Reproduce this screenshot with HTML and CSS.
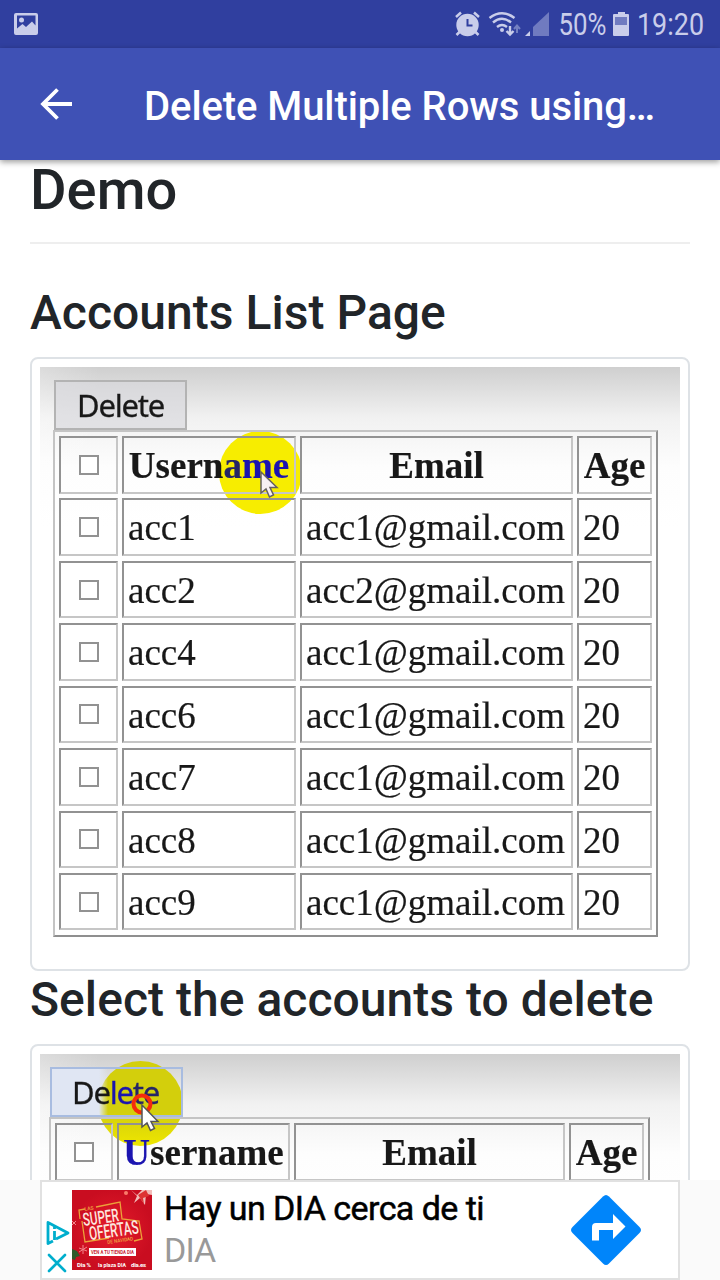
FILE: index.html
```html
<!DOCTYPE html>
<html lang="en">
<head>
<meta charset="utf-8">
<title>Delete Multiple Rows</title>
<link rel="stylesheet" href="styles.css">
</head>
<body>
<div class="screen">
  <div class="status">
    <svg class="status-photo" width="24" height="22" viewBox="0 0 24 22"><path fill="#c9cdea" fill-rule="evenodd" d="M2 0h20q2 0 2 2v18q0 2-2 2H2q-2 0-2-2V2q0-2 2-2zM3 2.500v13L8.500 11l3.500 3 6-5.500 3.500 4v-10z"/><circle cx="7.500" cy="7" r="2.500" fill="#c9cdea"/></svg>
    <svg class="status-right" width="256" height="40" viewBox="452 6 256 40">
      <g fill="#c9cdea">
        <circle cx="467.500" cy="25" r="11.200"/>
        <path d="M459.500 32l-3 3M475.500 32l3 3" stroke="#c9cdea" stroke-width="2.500"/>
        <path d="M456 17l5-4.500M479 17l-5-4.500" stroke="#c9cdea" stroke-width="2.500"/>
        <path d="M467.500 19v6.500h5" fill="none" stroke="#303f9f" stroke-width="2"/>
        <g fill="none" stroke="#c9cdea" stroke-width="2.400"><path d="M489.500 18q12.500-9.500 25 0M493 22.500q9-7.500 18 0M497 27q5-4 10 0"/><path d="M510 26v8M506.500 31l3.500 3.500 3.500-3.500"/></g>
        <circle cx="502" cy="30" r="2"/>
        <path d="M517 33v-7M514 29l3-3.500 3 3.500" fill="none" stroke="#7480c2" stroke-width="2"/>
        <path d="M530 31v5h-5z"/>
        <path d="M549 12v24h-16V27z" fill="#707bc0"/>
        <path d="M618 12h7v2h3q1 0 1 1v20q0 1-1 1h-14q-1 0-1-1V15q0-1 1-1h4z"/>
        <path d="M615 17h12v8h-12z" fill="#707bc0"/>
        <text x="558.500" y="35" textLength="48" lengthAdjust="spacingAndGlyphs">50%</text>
        <text x="637" y="35" textLength="67" lengthAdjust="spacingAndGlyphs">19:20</text>
      </g>
    </svg>
  </div>
  <header class="appbar">
    <svg width="32" height="32" viewBox="0 0 32 32" fill="none" stroke="#fff" stroke-width="3.800"><path d="M32 16H4M17.500 1.500L3 16l14.500 14.500"/></svg>
    <div class="title">Delete Multiple Rows using…</div>
  </header>
  <main class="content">
    <h1>Demo</h1>
    <h2 class="first">Accounts List Page</h2>
    <div class="thumb">
      <div class="shot">
        <span class="spot spot-name"></span>
        <div class="button">Delete</div>
        <div class="grid">
          <div class="cell check"><i></i></div><div class="cell head">Usern<span class="mid">a</span><span class="lit">me</span></div><div class="cell head">Email</div><div class="cell head">Age</div>
          <div class="cell check"><i></i></div><div class="cell">acc1</div><div class="cell">acc1@gmail.com</div><div class="cell">20</div>
          <div class="cell check"><i></i></div><div class="cell">acc2</div><div class="cell">acc2@gmail.com</div><div class="cell">20</div>
          <div class="cell check"><i></i></div><div class="cell">acc4</div><div class="cell">acc1@gmail.com</div><div class="cell">20</div>
          <div class="cell check"><i></i></div><div class="cell">acc6</div><div class="cell">acc1@gmail.com</div><div class="cell">20</div>
          <div class="cell check"><i></i></div><div class="cell">acc7</div><div class="cell">acc1@gmail.com</div><div class="cell">20</div>
          <div class="cell check"><i></i></div><div class="cell">acc8</div><div class="cell">acc1@gmail.com</div><div class="cell">20</div>
          <div class="cell check"><i></i></div><div class="cell">acc9</div><div class="cell">acc1@gmail.com</div><div class="cell">20</div>
        </div>
        <svg class="pointer pointer-name" width="20" height="30" viewBox="0 0 20 30"><path d="M2 2v21l5-4 3.500 8 4-2-3.500-7.500h7z" fill="#f7eff2" stroke="#66605f" stroke-width="1.500"/></svg>
      </div>
    </div>
    <h2 class="select">Select the accounts to delete</h2>
    <div class="thumb">
      <div class="shot second">
        <span class="spot spot-button"></span>
        <div class="button active">De<span class="lit">le</span><span class="mid">te</span></div>
        <div class="grid">
          <div class="cell check"><i></i></div><div class="cell head"><span class="lit">U</span>sername</div><div class="cell head">Email</div><div class="cell head">Age</div>
        </div>
        <svg class="pointer pointer-button" width="32" height="42" viewBox="0 0 32 42"><circle cx="12" cy="12" r="8.500" fill="none" stroke="#f52b0b" stroke-width="4"/><path d="M12 13v22l5-4 3.500 7.500 4-2-3.500-7h7z" fill="#fff" stroke="#555" stroke-width="1.500"/></svg>
      </div>
    </div>
  </main>
  <footer class="adbar">
    <div class="ad">
      <div class="ad-marks">
        <svg width="24" height="26" viewBox="0 0 24 26" fill="none" stroke="#00aecd" stroke-width="2.800" stroke-linejoin="round"><path d="M7 21l-5 2.500v-21L22 13 10 19"/><path d="M8.500 11v9M8.500 6.500v2.500"/></svg>
        <svg width="20" height="20" viewBox="0 0 20 20" fill="none" stroke="#00aecd" stroke-width="2.600" stroke-linecap="round"><path d="M2 2l16 16M18 2L2 18"/></svg>
      </div>
      <svg class="promo" width="80" height="80" viewBox="0 0 80 80">
        <defs><radialGradient id="red"><stop offset="0" stop-color="#e51c2b"/><stop offset="1" stop-color="#c90d20"/></radialGradient></defs>
        <path fill="url(#red)" d="M0 0h80v80H0z"/>
        <path d="M59 0l6 5 5-5h10v5l-6-1-1 11-5-7-6 5 3-7z" fill="#f1bcb8"/><path d="M66 5l8-5 3 6-6 2 1 6z" fill="#d33"/><circle cx="54" cy="3" r="2" fill="#fa7b69"/>
        <path d="M24 17l24-5 2 17 17 2 3 18-8 2M8 29l-1-9 6-1M10 31l3 21 24-4" fill="none" stroke="#eba23a" stroke-width="1.300"/>
        <g font-family="Roboto, sans-serif" font-weight="500" fill="#fde6df">
          <g transform="rotate(-8 12 37)"><text x="12" y="36" font-size="18" textLength="36" lengthAdjust="spacingAndGlyphs">SUPER</text><text x="16" y="51" font-size="19" textLength="50" lengthAdjust="spacingAndGlyphs">OFERTAS</text><text x="15" y="21" font-size="5" fill="#efa241" textLength="9">LAS</text><text x="33" y="57" font-size="5" fill="#efa241" textLength="26" lengthAdjust="spacingAndGlyphs">DE NAVIDAD</text></g>
          <path d="M17 58h47v8H17z" fill="#fff"/><text x="19" y="64" font-size="5" font-weight="700" fill="#c91c31" textLength="43" lengthAdjust="spacingAndGlyphs">VEN A TU TIENDA DIA</text>
          <g font-size="6" font-weight="700" fill="#fff"><text x="5" y="77" textLength="14">Dia %</text><text x="26" y="77" textLength="28" lengthAdjust="spacingAndGlyphs">la plaza DIA</text><text x="59" y="77" textLength="15">dia.es</text></g>
        </g>
        <path d="M7 58l8 3M11 55v9M7 62l8-5M0 31l4 4M0 35l4-4" stroke="#f3858b"/><path d="M0 59l5 2 3 5-4 1-1 3-3-1z" fill="#2e5a2b"/>
      </svg>
      <div class="ad-text"><div class="ad-title">Hay un DIA cerca de ti</div><div class="ad-sub">DIA</div></div>
      <svg class="go" width="70" height="70" viewBox="0 0 70 70"><path d="M32 1.500q3-3 6 0L68.500 32q3 3 0 6L38 68.500q-3 3-6 0L1.500 38q-3-3 0-6z" fill="#0085fa"/><path d="M21 45.500V32q0-4 4-4h17v-9l12.500 12.500L42 44v-9H28v10.500z" fill="#fff"/></svg>
    </div>
  </footer>
</div>
</body>
</html>
```

FILE: styles.css
```css
* { box-sizing: border-box; }
body { margin: 0; font-family: Roboto, sans-serif; color: #212529; background: #fff; }
.screen { width: 720px; height: 1280px; display: flex; flex-direction: column; overflow: hidden; }
.status { flex: none; height: 48px; background: #303f9f; display: flex; justify-content: space-between; padding: 6px 12px 0 14px; }
.status-photo { margin-top: 7px; }
.status-right { font-size: 31px; font-family: Roboto, sans-serif; overflow: visible; }
.appbar { flex: none; height: 112px; background: #3f51b5; display: flex; align-items: center; gap: 72px; padding-left: 40px; position: relative; z-index: 2; box-shadow: 0 2px 6px rgba(0, 0, 0, .4); }
.title { color: #fff; font-size: 40px; font-weight: 500; line-height: 48px; padding-top: 6px; white-space: nowrap; letter-spacing: -.08px; }
.content { flex: 1; min-height: 0; overflow: hidden; padding: 0 30px; }
h1, h2 { margin: 0; font-weight: 500; white-space: nowrap; letter-spacing: .04px; }
h1 { height: 84px; border-bottom: 2px solid #eee; font-size: 56px; line-height: 60px; }
h2 { font-size: 48px; line-height: 58px; }
h2.first { height: 113px; padding-top: 40px; }
h2.select { height: 73px; }
.thumb { border: 2px solid #dee2e6; border-radius: 8px; padding: 8px; height: 614px; }
.shot { position: relative; height: 100%; padding: 13px 0 0 13px; background: linear-gradient(#cfcfcf, #f1f1f1 50px, #fdfdfd 100px, #fff 160px); filter: blur(.5px); color: #181818; }
.shot::before { content: ""; position: absolute; inset: 0; background: linear-gradient(90deg, rgba(255,255,255,.25), transparent 60px); }
.button { position: relative; width: 133px; height: 50px; margin-left: 1px; border: 2px solid #b3b3b3; background: rgba(215, 215, 219, .65); font: 31px/46px "Noto Sans", "Open Sans", sans-serif; text-align: center; letter-spacing: -1.2px; -webkit-text-stroke: .3px; }
.active { border-color: #a8bce0; background: linear-gradient(90deg, #e0e6f3 47px, transparent 56px); text-indent: -2px; }
.grid { position: relative; width: 605px; display: grid; grid-template-columns: 59px 174px 273px 75px; grid-auto-rows: 57.500px; gap: 4.930px 4px; padding: 4px 4px 5px; border: 2px solid; border-color: #c4c4c4 #8f8f8f #8f8f8f #c4c4c4; }
.cell { border: 2px solid; border-color: #929292 #c6c6c6 #c6c6c6 #929292; font: 37px/55px "Liberation Serif", serif; padding-left: 4px; white-space: nowrap; -webkit-text-stroke: .2px; }
.head { font-weight: 700; text-align: center; padding-left: 0; }
.check { display: flex; align-items: center; justify-content: center; padding: 0; }
.check i { width: 20px; height: 20px; border: 2px solid #929292; background: #fff; }
.lit { color: #1b14b0; }
.mid { color: #252567; }
.spot { position: absolute; border-radius: 50%; }
.spot-name { left: 179px; top: 64px; width: 83px; height: 83px; background: #f7ed00; }
.spot-button { left: 58px; top: 7px; width: 85px; height: 85px; background: linear-gradient(#d3cf0c 60%, #eee600); }
.pointer { position: absolute; }
.pointer-name { left: 219px; top: 103px; }
.pointer-button { left: 90px; top: 38px; }
.second { padding-left: 9px; }
.second .grid { grid-template-columns: 58px 173px 271px 75px; width: 601px; }
.adbar { flex: none; height: 100px; background: #fafafa; padding: 0 40px; position: relative; }
.ad { height: 100px; border: 2px solid #e1e1e1; background: #fff; display: flex; padding: 8px 0 0 4px; }
.ad-marks { width: 26px; display: flex; flex-direction: column; align-items: flex-start; gap: 7px; padding-top: 30px; }
.ad-marks svg:last-child { margin-left: 1px; }
.promo { flex: none; }
.ad-text { flex: 1; padding-left: 12px; white-space: nowrap; }
.ad-title { color: #000; font-size: 34px; line-height: 37px; letter-spacing: -.56px; -webkit-text-stroke: .5px #000; }
.ad-sub { color: #999; font-size: 34px; line-height: 46px; letter-spacing: -.9px; }
.go { flex: none; margin: 5px 37px 0 0; }
```
